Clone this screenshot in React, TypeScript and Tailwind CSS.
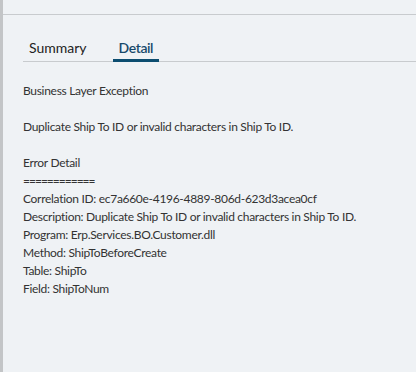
import React from 'react';

const detailLines = [
    'Business Layer Exception',
    '',
    'Duplicate Ship To ID or invalid characters in Ship To ID.',
    '',
    'Error Detail',
    '============',
    'Correlation ID: ec7a660e-4196-4889-806d-623d3acea0cf',
    'Description: Duplicate Ship To ID or invalid characters in Ship To ID.',
    'Program: Erp.Services.BO.Customer.dll',
    'Method: ShipToBeforeCreate',
    'Table: ShipTo',
    'Field: ShipToNum',
];

const App = () => {
    return (
        <div className="flex h-[372px] w-full bg-[#eff2f5] font-['Lato',sans-serif] overflow-hidden">
            {/* left splitter edge */}
            <div className="w-[3px] shrink-0 bg-[#c3c5c7]" />

            <div className="flex-1 flex flex-col">
                <div className="h-[15px] border-b border-[#c8cbce]" />

                <div className="pl-[20px] mt-[22px]">
                    <div className="flex gap-[20px] border-b border-[#c8cbce]">
                        <button className="px-[6px] pt-px pb-[1px] -mb-px border-b-[3px] border-transparent text-[14px] leading-[20px] text-[#222]">
                            Summary
                        </button>
                        <button className="px-[6px] pt-px pb-[1px] -mb-px border-b-[3px] border-[#0c4d70] text-[14px] leading-[20px] font-semibold tracking-[-0.4px] text-[#17496b]">
                            Detail
                        </button>
                    </div>
                </div>

                <div className="pl-[20px] mt-[20px] text-[12px] leading-[18px] tracking-[-0.3px] text-[#333]">
                    {detailLines.map((line, idx) => (
                        <div
                            key={idx}
                            className={line.startsWith('=') ? 'h-[18px] whitespace-nowrap tracking-[-1px]' : 'h-[18px] whitespace-nowrap'}
                        >
                            {line}
                        </div>
                    ))}
                </div>
            </div>
        </div>
    );
};

export default App;
